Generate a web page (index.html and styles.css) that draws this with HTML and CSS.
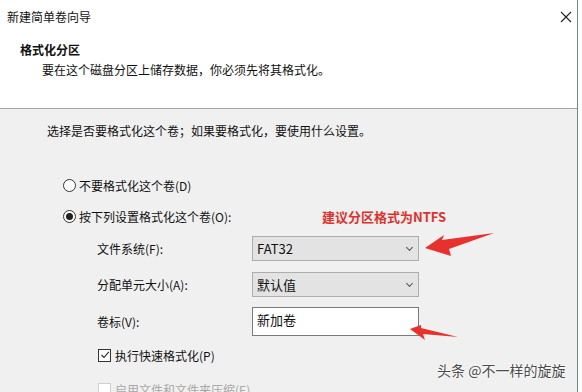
FILE: index.html
```html
<!DOCTYPE html>
<html lang="zh-CN">
<head>
    <meta charset="UTF-8">
    <meta name="viewport" content="width=device-width, initial-scale=1.0">
    <title>新建简单卷向导</title>
    <link rel="stylesheet" href="styles.css">
</head>
<body>

    <div class="window">
        <div class="wizard">
            <div class="top">
                <div class="titlebar">
                    <span>新建简单卷向导</span>
                    <svg class="close" width="12" height="12" viewBox="0 0 12 12">
                        <path d="M1 1 L11 11 M11 1 L1 11" stroke="#222" stroke-width="1.1" fill="none"/>
                    </svg>
                </div>
                <div class="heading">格式化分区</div>
                <div class="desc">要在这个磁盘分区上储存数据，你必须先将其格式化。</div>
            </div>

            <div class="body">
                <div class="intro">选择是否要格式化这个卷；如果要格式化，要使用什么设置。</div>

                <label class="radio-row first">
                    <span class="radio"></span>不要格式化这个卷(D)
                </label>
                <label class="radio-row">
                    <span class="radio checked"></span>按下列设置格式化这个卷(O):
                </label>

                <div class="form">
                    <div class="label">文件系统(F):</div>
                    <div class="select">FAT32<span class="chev"></span></div>

                    <div class="label">分配单元大小(A):</div>
                    <div class="select">默认值<span class="chev"></span></div>

                    <div class="label">卷标(V):</div>
                    <div class="textbox">新加卷</div>
                </div>

                <label class="check-row quick">
                    <span class="check checked">
                        <svg width="10" height="10" viewBox="0 0 10 10"><path d="M1.5 5 L4 7.5 L8.8 1.8" stroke="#222" stroke-width="1.1" fill="none"/></svg>
                    </span>执行快速格式化(P)
                </label>
                <label class="check-row disabled">
                    <span class="check"></span>启用文件和文件夹压缩(E)
                </label>
            </div>
        </div>
        <div class="edge"></div>

        <!-- annotations -->
        <div class="note">建议分区格式为NTFS</div>
        <svg class="arrows" width="582" height="392" viewBox="0 0 582 392">
            <polygon points="425,248 444,235 442,240 494,233 449,249 451,256" fill="#e8302c"/>
            <polygon points="410,329 421,325 421,328 458,337 423,334 425,340" fill="#e8302c"/>
        </svg>
        <div class="watermark">头条 @不一样的旋旋</div>
    </div>

</body>
</html>
```

FILE: styles.css
```css
body {
    margin: 0;
    font-family: "Noto Sans CJK SC", "Microsoft YaHei", sans-serif;
    font-size: 12px;
    color: #111;
    background-color: #fff;
}

.window {
    position: relative;
    display: flex;
    width: 582px;
    height: 392px;
    overflow: hidden;
}

.wizard {
    width: 577px;
    display: flex;
    flex-direction: column;
}

.edge {
    width: 1px;
    background-color: #6f8791;
}

.top {
    flex-shrink: 0;
    height: 109px;
    box-sizing: border-box;
    padding-top: 9px;
    background: #fff;
    border-bottom: 1px solid #a4a4a4;
}

.titlebar {
    display: flex;
    justify-content: space-between;
    align-items: center;
    height: 16px;
    line-height: 16px;
    padding: 0 5px 0 7px;
}

.close {
    margin-top: -1px;
}

.heading {
    margin-top: 17px;
    padding-left: 20px;
    font-weight: bold;
    line-height: 16px;
}

.desc {
    margin-top: 4px;
    padding-left: 42px;
    line-height: 16px;
}

.body {
    flex: 1;
    min-height: 0;
    overflow: hidden;
    background-color: #f0f0f0;
    padding-top: 14px;
}

.intro {
    padding-left: 47px;
    line-height: 16px;
}

.radio-row {
    display: flex;
    align-items: center;
    height: 20px;
    padding-left: 63px;
    margin-top: 11px;
}

.radio-row.first {
    margin-top: 36px;
}

.radio {
    width: 11px;
    height: 11px;
    border: 1px solid #333;
    border-radius: 50%;
    background: #fff;
    margin-right: 3px;
    display: flex;
    align-items: center;
    justify-content: center;
}

.radio.checked::after {
    content: "";
    width: 7px;
    height: 7px;
    border-radius: 50%;
    background: #222;
}

.form {
    display: grid;
    grid-template-columns: 155px 167px;
    grid-template-rows: 25px 25px 29px;
    row-gap: 11px;
    align-items: center;
    margin-top: 10px;
    padding-left: 97px;
}

.form .label:nth-child(5) {
    margin-top: -2px;
}

.select {
    height: 25px;
    box-sizing: border-box;
    border: 1px solid #adadad;
    background-color: #e3e3e3;
    display: flex;
    align-items: center;
    justify-content: space-between;
    padding: 0 6px 0 4px;
    font-size: 13px;
}

.chev {
    width: 4px;
    height: 4px;
    border-right: 1px solid #555;
    border-bottom: 1px solid #555;
    transform: rotate(45deg);
    margin-top: -3px;
}

.textbox {
    height: 29px;
    box-sizing: border-box;
    border: 1px solid #7a7a7a;
    background: #fff;
    padding: 3px 4px;
    font-size: 13px;
    line-height: 18px;
    margin-top: -2px;
}

.check-row {
    display: flex;
    align-items: center;
    height: 20px;
    padding-left: 98px;
}

.check-row.quick {
    margin-top: 8px;
}

.check-row.disabled {
    margin-top: 14px;
    color: #a8a8a8;
}

.check {
    width: 11px;
    height: 11px;
    border: 1px solid #333;
    background: #fff;
    margin-right: 4px;
    display: flex;
    align-items: center;
    justify-content: center;
}

.disabled .check {
    border-color: #cfcfcf;
}

.note {
    position: absolute;
    left: 322px;
    top: 208px;
    color: #e0302c;
    font-size: 13px;
    font-weight: bold;
    line-height: 18px;
}

.arrows {
    position: absolute;
    left: 0;
    top: 0;
    pointer-events: none;
}

.watermark {
    position: absolute;
    left: 437px;
    top: 361px;
    font-size: 14px;
    line-height: 18px;
    color: #4a4a4a;
    text-shadow: 0 0 2px #fff, 0 0 2px #fff;
}
```
